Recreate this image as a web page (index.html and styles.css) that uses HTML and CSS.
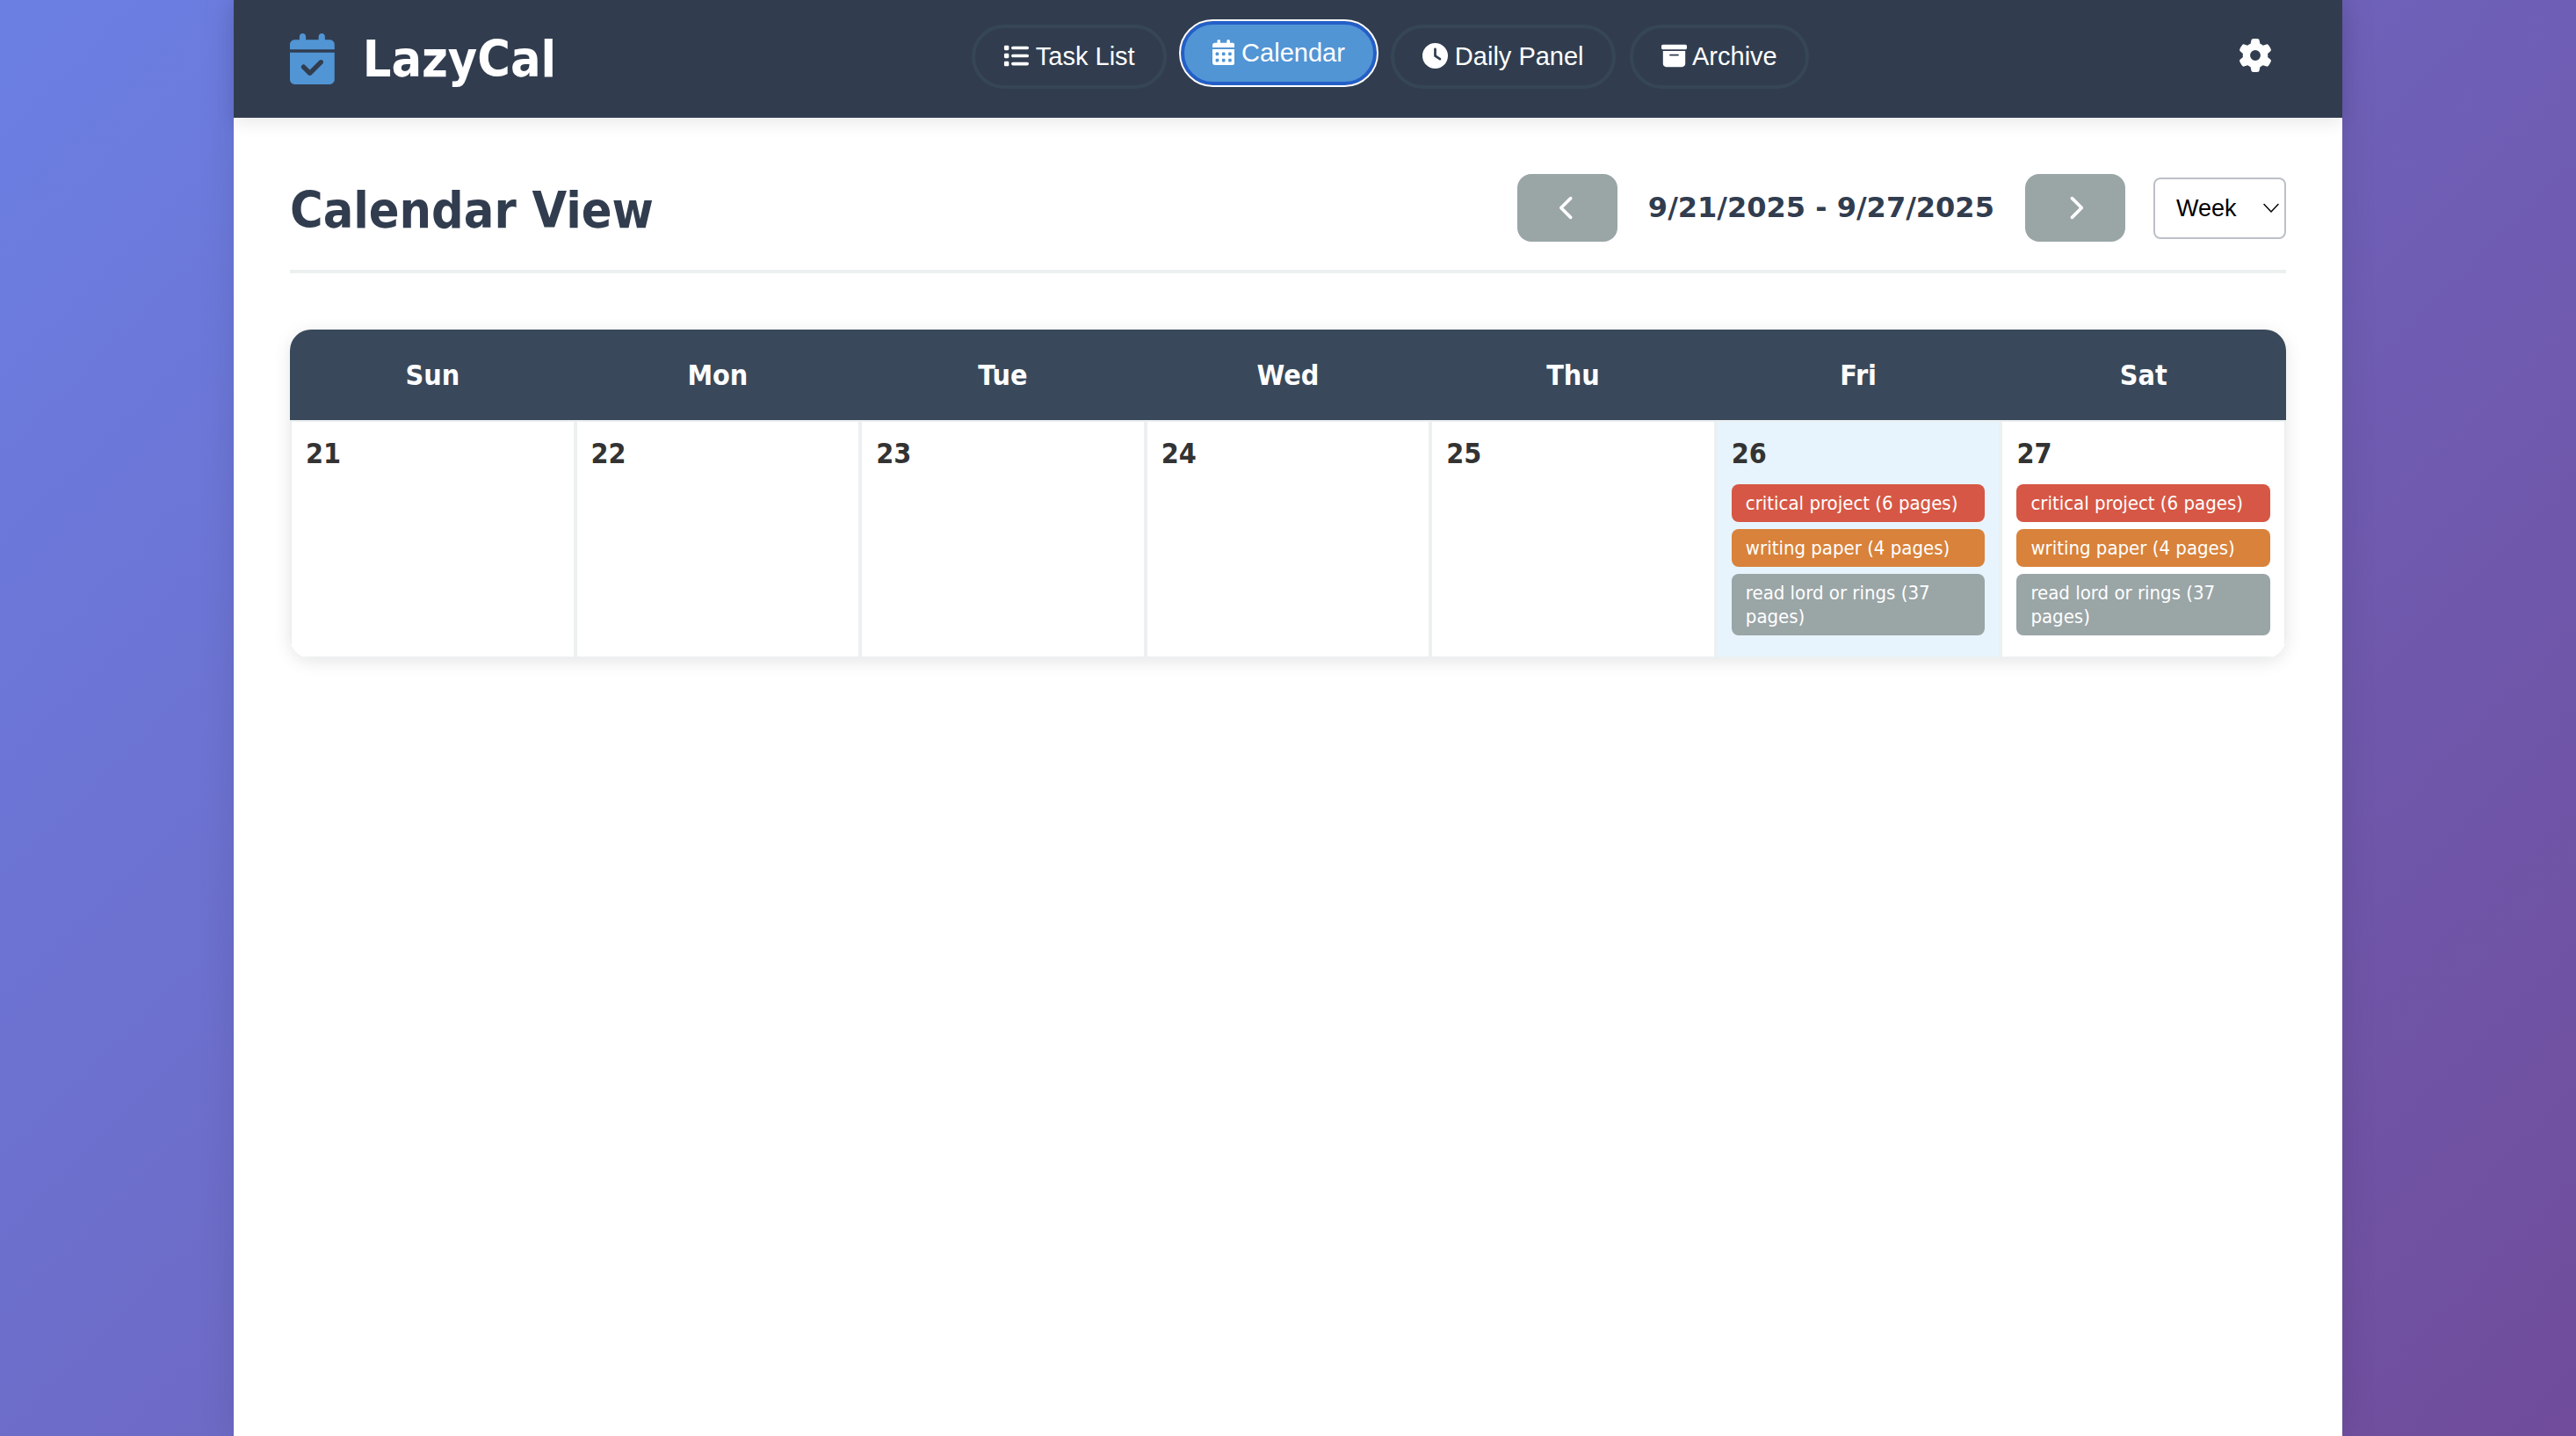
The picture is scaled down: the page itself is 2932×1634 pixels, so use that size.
FILE: index.html
```html
<!DOCTYPE html>
<html lang="en">
<head>
  <meta charset="utf-8">
  <title>LazyCal</title>
  <meta name="viewport" content="width=device-width, initial-scale=1">
  <link rel="stylesheet" href="styles.css">
</head>
<body>
  <div class="app">
    <header class="app-header">
      <h1 class="logo">
        <svg class="logo-icon" viewBox="0 0 448 512" aria-hidden="true"><path d="M128 0c17.700 0 32 14.300 32 32V64H288V32c0-17.700 14.300-32 32-32s32 14.300 32 32V64h48c26.500 0 48 21.500 48 48v48H0V112C0 85.500 21.500 64 48 64H96V32c0-17.700 14.300-32 32-32zM0 192H448V464c0 26.500-21.500 48-48 48H48c-26.500 0-48-21.500-48-48V192zM329 305c9.400-9.400 9.400-24.600 0-33.900s-24.600-9.400-33.900 0l-95 95-47-47c-9.400-9.400-24.600-9.400-33.900 0s-9.400 24.600 0 33.900l64 64c9.400 9.400 24.600 9.400 33.900 0L329 305z"/></svg>
        <span>LazyCal</span>
      </h1>
      <nav class="nav">
        <button type="button" class="nav-btn"><svg class="icon" viewBox="0 0 512 512" aria-hidden="true"><path d="M40 48C26.700 48 16 58.700 16 72v48c0 13.300 10.700 24 24 24H88c13.300 0 24-10.700 24-24V72c0-13.300-10.700-24-24-24H40zM192 64c-17.700 0-32 14.300-32 32s14.300 32 32 32H480c17.700 0 32-14.300 32-32s-14.300-32-32-32H192zm0 160c-17.700 0-32 14.300-32 32s14.300 32 32 32H480c17.700 0 32-14.300 32-32s-14.300-32-32-32H192zm0 160c-17.700 0-32 14.300-32 32s14.300 32 32 32H480c17.700 0 32-14.300 32-32s-14.300-32-32-32H192zM16 232v48c0 13.300 10.700 24 24 24H88c13.300 0 24-10.700 24-24V232c0-13.300-10.700-24-24-24H40c-13.300 0-24 10.700-24 24zM40 368c-13.300 0-24 10.700-24 24v48c0 13.300 10.700 24 24 24H88c13.300 0 24-10.700 24-24V392c0-13.300-10.700-24-24-24H40z"/></svg> Task List</button>
        <button type="button" class="nav-btn nav-btn-active" aria-current="page"><svg class="icon" viewBox="0 0 448 512" aria-hidden="true"><path d="M128 0c17.700 0 32 14.300 32 32V64H288V32c0-17.700 14.300-32 32-32s32 14.300 32 32V64h48c26.500 0 48 21.500 48 48v48H0V112C0 85.500 21.500 64 48 64H96V32c0-17.700 14.300-32 32-32zM0 192H448V464c0 26.500-21.500 48-48 48H48c-26.500 0-48-21.500-48-48V192zm64 80v32c0 8.800 7.200 16 16 16h32c8.800 0 16-7.200 16-16V272c0-8.800-7.200-16-16-16H80c-8.800 0-16 7.200-16 16zm128 0v32c0 8.800 7.200 16 16 16h32c8.800 0 16-7.200 16-16V272c0-8.800-7.200-16-16-16H208c-8.800 0-16 7.200-16 16zm144-16c-8.800 0-16 7.200-16 16v32c0 8.800 7.200 16 16 16h32c8.800 0 16-7.200 16-16V272c0-8.800-7.200-16-16-16H336zM64 400v32c0 8.800 7.200 16 16 16h32c8.800 0 16-7.200 16-16V400c0-8.800-7.200-16-16-16H80c-8.800 0-16 7.200-16 16zm144-16c-8.800 0-16 7.200-16 16v32c0 8.800 7.200 16 16 16h32c8.800 0 16-7.200 16-16V400c0-8.800-7.200-16-16-16H208zm112 16v32c0 8.800 7.200 16 16 16h32c8.800 0 16-7.200 16-16V400c0-8.800-7.200-16-16-16H336c-8.800 0-16 7.200-16 16z"/></svg> Calendar</button>
        <button type="button" class="nav-btn"><svg class="icon" viewBox="0 0 512 512" aria-hidden="true"><path d="M256 0a256 256 0 1 1 0 512A256 256 0 1 1 256 0zM232 120V256c0 8 4 15.500 10.700 20l96 64c11 7.400 25.900 4.400 33.300-6.700s4.400-25.900-6.700-33.300L280 243.200V120c0-13.300-10.700-24-24-24s-24 10.700-24 24z"/></svg> Daily Panel</button>
        <button type="button" class="nav-btn"><svg class="icon" viewBox="0 0 512 512" aria-hidden="true"><path d="M32 32H480c17.700 0 32 14.300 32 32V96c0 17.700-14.300 32-32 32H32C14.300 128 0 113.700 0 96V64C0 46.300 14.300 32 32 32zm0 128H480V416c0 35.300-28.700 64-64 64H96c-35.300 0-64-28.700-64-64V160zm128 80c0 8.800 7.200 16 16 16H336c8.800 0 16-7.200 16-16s-7.200-16-16-16H176c-8.800 0-16 7.200-16 16z"/></svg> Archive</button>
      </nav>
      <button type="button" class="settings-btn" aria-label="Settings"><svg class="settings-icon" viewBox="0 0 512 512" aria-hidden="true"><path d="M495.900 166.600c3.200 8.700 .5 18.400-6.400 24.600l-43.300 39.400c1.100 8.300 1.700 16.800 1.700 25.400s-.6 17.100-1.700 25.400l43.300 39.400c6.900 6.200 9.600 15.900 6.400 24.600c-4.400 11.900-9.700 23.300-15.800 34.300l-4.700 8.100c-6.600 11-14 21.400-22.100 31.200c-5.900 7.200-15.700 9.600-24.500 6.800l-55.700-17.700c-13.400 10.300-28.200 18.900-44 25.400l-12.500 57.100c-2 9.100-9 16.300-18.200 17.800c-13.800 2.300-28 3.500-42.500 3.500s-28.700-1.200-42.500-3.500c-9.200-1.500-16.200-8.700-18.200-17.800l-12.500-57.100c-15.800-6.500-30.600-15.100-44-25.400L83.100 425.900c-8.800 2.800-18.600 .3-24.500-6.800c-8.100-9.800-15.500-20.200-22.100-31.200l-4.700-8.100c-6.100-11-11.400-22.400-15.800-34.300c-3.200-8.700-.5-18.400 6.400-24.600l43.300-39.400C64.600 273.100 64 264.600 64 256s.6-17.100 1.700-25.400L22.400 191.200c-6.900-6.200-9.600-15.900-6.400-24.600c4.400-11.900 9.700-23.300 15.800-34.300l4.700-8.100c6.600-11 14-21.400 22.100-31.200c5.900-7.200 15.700-9.600 24.500-6.800l55.700 17.700c13.400-10.300 28.200-18.900 44-25.400l12.500-57.100c2-9.100 9-16.300 18.200-17.800C227.300 1.200 241.500 0 256 0s28.700 1.200 42.500 3.500c9.200 1.500 16.200 8.700 18.200 17.800l12.500 57.100c15.800 6.500 30.600 15.100 44 25.400l55.700-17.700c8.800-2.800 18.600-.3 24.500 6.800c8.100 9.800 15.500 20.200 22.100 31.200l4.700 8.100c6.100 11 11.400 22.400 15.800 34.300zM256 336a80 80 0 1 0 0-160 80 80 0 1 0 0 160z"/></svg></button>
    </header>

    <main class="content">
      <div class="view-header">
        <h2 class="view-title">Calendar View</h2>
        <div class="controls">
          <button type="button" class="step-btn" aria-label="Previous week"><svg class="step-icon" viewBox="0 0 320 512" aria-hidden="true"><path d="M224 480c-8.188 0-16.380-3.125-22.620-9.375l-192-192c-12.500-12.500-12.500-32.750 0-45.250l192-192c12.500-12.500 32.750-12.500 45.250 0s12.500 32.750 0 45.250L77.250 256l169.400 169.400c12.500 12.500 12.500 32.750 0 45.250C240.400 476.900 232.200 480 224 480z"/></svg></button>
          <h3 class="range">9/21/2025 - 9/27/2025</h3>
          <button type="button" class="step-btn" aria-label="Next week"><svg class="step-icon" viewBox="0 0 320 512" aria-hidden="true"><path d="M96 480c-8.188 0-16.380-3.125-22.620-9.375c-12.500-12.500-12.500-32.750 0-45.250L242.800 256L73.380 86.630c-12.500-12.500-12.500-32.750 0-45.250s32.750-12.500 45.250 0l192 192c12.500 12.500 12.500 32.750 0 45.250l-192 192C112.400 476.900 104.200 480 96 480z"/></svg></button>
          <div class="select-wrap">
            <select class="view-select" aria-label="Calendar range">
              <option>Day</option>
              <option selected>Week</option>
              <option>Month</option>
            </select>
            <svg class="select-arrow" viewBox="0 0 18 12" aria-hidden="true"><path d="M1 1.500L9 10L17 1.500"/></svg>
          </div>
        </div>
      </div>

      <table class="calendar">
        <thead>
          <tr>
            <th scope="col">Sun</th>
            <th scope="col">Mon</th>
            <th scope="col">Tue</th>
            <th scope="col">Wed</th>
            <th scope="col">Thu</th>
            <th scope="col">Fri</th>
            <th scope="col">Sat</th>
          </tr>
        </thead>
        <tbody>
          <tr>
            <td><div class="day">21</div></td>
            <td><div class="day">22</div></td>
            <td><div class="day">23</div></td>
            <td><div class="day">24</div></td>
            <td><div class="day">25</div></td>
            <td class="today">
              <div class="day">26</div>
              <div class="task critical">critical project (6 pages)</div>
              <div class="task high">writing paper (4 pages)</div>
              <div class="task low">read lord or rings (37 pages)</div>
            </td>
            <td>
              <div class="day">27</div>
              <div class="task critical">critical project (6 pages)</div>
              <div class="task high">writing paper (4 pages)</div>
              <div class="task low">read lord or rings (37 pages)</div>
            </td>
          </tr>
        </tbody>
      </table>
    </main>
  </div>
</body>
</html>
```
FILE: styles.css
```css
* {
  margin: 0;
  padding: 0;
  box-sizing: border-box;
}

body {
  min-height: 100vh;
  font-family: "DejaVu Sans Condensed", "DejaVu Sans", sans-serif;
  color: #333;
  background: linear-gradient(135deg, #6b7fe3 0%, #704c9b 100%);
}

button,
select {
  font-family: "Liberation Sans", Arial, sans-serif;
}

svg {
  fill: currentColor;
}

.app {
  max-width: 2400px;
  min-height: 100vh;
  margin: 0 auto;
  background: #fff;
  box-shadow: 0 0 40px rgba(0, 0, 0, 0.1);
}

/* Top bar */
.app-header {
  display: flex;
  justify-content: space-between;
  align-items: flex-start;
  padding: 28px 64px;
  color: #fff;
  background: #313d4f;
  box-shadow: 0 4px 20px rgba(0, 0, 0, 0.1);
}

.logo {
  display: flex;
  align-items: center;
  gap: 32px;
  font-size: 57px;
  line-height: 78px;
}

.logo-icon {
  height: 58px;
  color: #5195d5;
}

.nav {
  display: flex;
  gap: 16px;
}

.nav-btn {
  padding: 16px 32px;
  border: 4px solid #364656;
  border-radius: 50px;
  color: #fff;
  background: transparent;
  font-size: 29px;
  line-height: 33px;
}

.nav-btn-active {
  border-color: #245fc8;
  background: #5195d5;
  outline: 2px solid #fff;
  transform: translateY(-4px);
}

.icon {
  height: 29px;
  vertical-align: -4px;
}

.settings-btn {
  padding: 16px;
  border: 0;
  color: #fff;
  background: transparent;
}

.settings-icon {
  display: block;
  height: 38px;
}

/* Calendar view */
.content {
  padding: 64px;
}

.view-header {
  display: flex;
  justify-content: space-between;
  align-items: center;
  margin-bottom: 64px;
  padding-bottom: 32px;
  border-bottom: 4px solid #ecf0f1;
}

.view-title {
  padding-top: 4px;
  color: #313d4f;
  font-size: 57px;
  line-height: 70px;
}

.controls {
  display: flex;
  align-items: center;
  gap: 32px;
}

.step-btn {
  padding: 24px 48px;
  border: 0;
  border-radius: 16px;
  color: #fff;
  background: #9aa5a6;
}

.step-icon {
  display: block;
  height: 29px;
}

.range {
  min-width: 400px;
  color: #313d4f;
  font-family: "DejaVu Sans", sans-serif;
  font-size: 32px;
  line-height: 39px;
  text-align: center;
}

.select-wrap {
  display: grid;
  align-items: center;
}

.view-select {
  grid-area: 1 / 1;
  width: 151px;
  padding: 16px 24px;
  border: 2px solid #bcc0c8;
  border-radius: 8px;
  color: #000;
  background: #fff;
  font-size: 27px;
  line-height: 34px;
  appearance: none;
}

.select-arrow {
  grid-area: 1 / 1;
  justify-self: end;
  width: 18px;
  margin-right: 8px;
  fill: none;
  stroke: #000;
  stroke-width: 1.5;
  stroke-linecap: round;
  pointer-events: none;
}

.calendar {
  width: 100%;
  table-layout: fixed;
  border-spacing: 0;
  border-radius: 24px;
  overflow: hidden;
  box-shadow: 0 4px 20px rgba(0, 0, 0, 0.1);
}

.calendar th {
  padding: 33px 16px 31px;
  color: #fff;
  background: #39495b;
  font-size: 32px;
  line-height: 39px;
}

.calendar td {
  height: 271px;
  padding: 16px;
  border: 2px solid #ecf0f1;
  background: #fff;
  vertical-align: top;
}

.calendar .today {
  background: #e8f4fd;
}

.day {
  margin-bottom: 14px;
  font-size: 32px;
  font-weight: 700;
  line-height: 41px;
}

.task {
  margin-bottom: 8px;
  padding: 8px 16px;
  border-radius: 8px;
  color: #fff;
  font-size: 22px;
  line-height: 27px;
}

.critical {
  background: #d65745;
}

.high {
  background: #d8823b;
}

.low {
  background: #9aa5a6;
}
```
